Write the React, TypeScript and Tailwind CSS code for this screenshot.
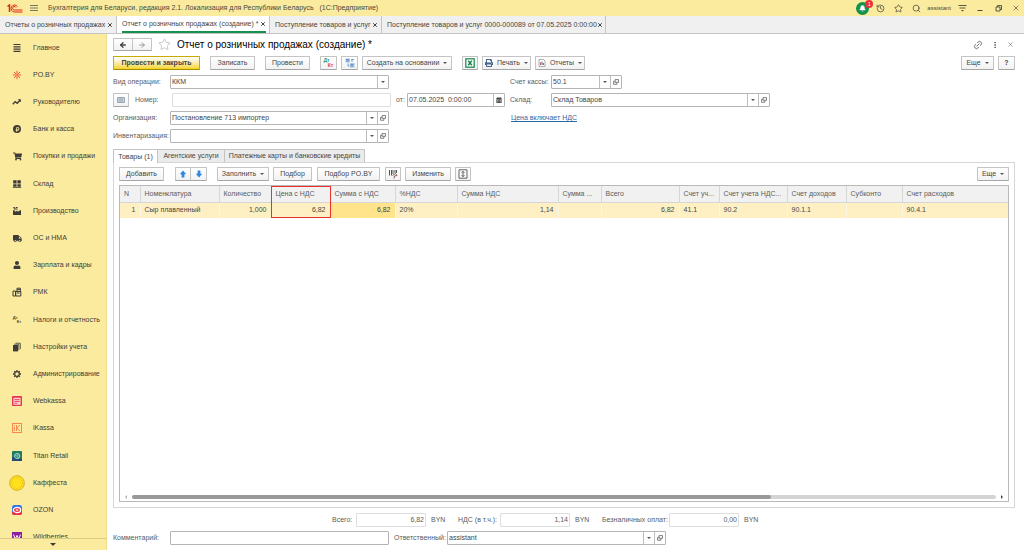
import { useState } from "react";
import type { ReactNode } from "react";
import clsx from "clsx";
import {
  ArrowLeft,
  ArrowRight,
  Bell,
  History,
  Link2,
  MoreVertical,
  Search,
  Star,
  X,
} from "lucide-react";
import {
  FaCalendarAlt,
  FaPrint,
  FaRubleSign,
  FaShoppingCart,
  FaTruck,
  FaUser,
} from "react-icons/fa";

type Section = { label: string; icon: ReactNode };

const sections: Section[] = [
  {
    label: "Главное",
    icon: (
      <svg viewBox="0 0 10 10" className="size-2.5" stroke="#3f3c38" strokeWidth="1.2">
        <path d="M1.5 1.5h7M1.5 3.8h7M1.5 6.1h7M1.5 8.4h7" />
      </svg>
    ),
  },
  {
    label: "PO.BY",
    icon: (
      <svg viewBox="0 0 10 10" className="size-2.5" stroke="#ee5a36" strokeWidth="1">
        <path d="M5 .8v3.6M5 5.6v3.6M.8 5h3.2M6 5h3.2M2 2l2.2 2.2M5.8 5.8L8 8M8 2L5.8 4.200M4.2 5.8L2 8M4 5h2" />
      </svg>
    ),
  },
  {
    label: "Руководителю",
    icon: (
      <svg viewBox="0 0 10 10" className="size-2.5" fill="none" stroke="#3f3c38" strokeWidth="1.4">
        <path d="M.8 7.2l2.4-2.6 2 1.6 3-3.2" />
        <path d="M5.8 2.2h3v3z" fill="#3f3c38" stroke="none" />
      </svg>
    ),
  },
  {
    label: "Банк и касса",
    icon: (
      <span className="flex size-2 items-center justify-center rounded-full bg-[#3f3c38] text-[#fbeb9e]">
        <FaRubleSign size={5} />
      </span>
    ),
  },
  { label: "Покупки и продажи", icon: <FaShoppingCart size={9} /> },
  {
    label: "Склад",
    icon: (
      <svg viewBox="0 0 10 10" className="size-2.5" fill="#3f3c38">
        <path d="M1.2 1.2h3.4v3.4H1.2zM5.4 1.2h3.4v3.4H5.4zM1.2 5.2h3.4v2.6H1.2zM5.4 5.2h3.4v2.6H5.4zM.8 8.2h8.4V9H.8z" />
      </svg>
    ),
  },
  {
    label: "Производство",
    icon: (
      <svg viewBox="0 0 10 10" className="size-2.5" fill="#3f3c38">
        <path d="M1 9V4.2h1.8v1.6L5.400 4.500v1.300L9 4v5z" />
        <path d="M1 1.200h2.400v1H1zM2 2.500h3.600v1H2zM4 1h1.600v1H4z" />
      </svg>
    ),
  },
  { label: "ОС и НМА", icon: <FaTruck size={9} /> },
  { label: "Зарплата и кадры", icon: <FaUser size={8} /> },
  {
    label: "РМК",
    icon: (
      <svg viewBox="0 0 10 10" className="size-2.5" fill="none" stroke="#3f3c38" strokeWidth="1">
        <path d="M1 4h2.5v5H1zM3.8 4.5h5V9h-5zM5 4.5V1.2h3.4v3.3" />
        <path d="M5 6h2.6M5 2.6h3.4" />
      </svg>
    ),
  },
  {
    label: "Налоги и отчетность",
    icon: (
      <span className="flex flex-col text-[4px] leading-[4px] font-bold">
        <span>Дт</span>
        <span className="pl-1">Кт</span>
      </span>
    ),
  },
  {
    label: "Настройки учета",
    icon: (
      <svg viewBox="0 0 10 10" className="size-2.5" fill="#3f3c38">
        <path d="M1 3h5v6.4H1z" />
        <path d="M2.2 2.2h4.6v6M3.6 1.2H8.3v6" fill="none" stroke="#3f3c38" strokeWidth=".8" />
      </svg>
    ),
  },
  {
    label: "Администрирование",
    icon: (
      <svg viewBox="0 0 10 10" className="size-2.5" fill="none" stroke="#3f3c38">
        <circle cx="5" cy="5" r="2.3" strokeWidth="1.200" />
        <path d="M5 1v1.400M5 7.600V9M1 5h1.400M7.600 5H9M2.200 2.200l1 1M6.800 6.800l1 1M7.800 2.200l-1 1M3.200 6.800l-1 1" strokeWidth="1.300" />
      </svg>
    ),
  },
  {
    label: "Webkassa",
    icon: (
      <svg viewBox="0 0 10 10" className="size-2.5">
        <rect width="10" height="10" rx="1" fill="#ea3652" />
        <rect x="1.4" y="1.8" width="7.2" height="7" fill="#fbd4d4" />
        <path d="M2.4 3.6h5.2M2.4 5.4h5.2M2.4 7.2h3" stroke="#ea3652" strokeWidth=".9" />
      </svg>
    ),
  },
  {
    label: "iKassa",
    icon: (
      <svg viewBox="0 0 10 10" className="size-2.5" fill="none" stroke="#f58a4b">
        <rect x=".5" y=".5" width="9" height="9" />
        <path d="M2.4 4v4M2.4 2v1M4.5 2v6M7.8 2L4.8 5l3 3" />
      </svg>
    ),
  },
  {
    label: "Titan Retail",
    icon: (
      <svg viewBox="0 0 10 10" className="size-2.5">
        <rect width="10" height="10" rx="1" fill="#1f7a63" />
        <path d="M0 6l10 2v2H0z" fill="#264b73" />
        <circle cx="5.2" cy="5" r="2.6" fill="none" stroke="#a9dcd0" />
        <path d="M3.6 4l3 3M5 3.4l1.6 1.4" stroke="#e0f2ee" strokeWidth=".8" />
      </svg>
    ),
  },
  {
    label: "Каффеста",
    icon: (
      <svg viewBox="0 0 16 16" className="size-4">
        <circle cx="8" cy="8" r="7.4" fill="#ffe11c" stroke="#c79d20" strokeWidth=".7" />
        <circle cx="8" cy="8" r="5.4" fill="none" stroke="#e2a91c" strokeWidth=".8" strokeDasharray="1 1" />
      </svg>
    ),
  },
  {
    label: "OZON",
    icon: (
      <svg viewBox="0 0 10 10" className="size-2.5">
        <rect width="10" height="10" rx="2.4" fill="#2f74ea" />
        <path d="M0 7l10-1v2a2 2 0 01-2 2H2a2 2 0 01-2-2z" fill="#ee2f45" />
        <ellipse cx="5" cy="5" rx="3.6" ry="2.6" fill="#ee2f45" stroke="#fff" strokeWidth="1.3" />
        <ellipse cx="5" cy="5" rx="1.5" ry=".8" fill="#fff" />
      </svg>
    ),
  },
  {
    label: "Wildberries",
    icon: (
      <svg viewBox="0 0 10 10" className="size-2.5">
        <rect width="10" height="10" fill="#8a1fa0" />
        <path d="M1.6 2.6l1.6 4.6L5 3.4l1.8 3.8 1.6-4.6" fill="none" stroke="#fff" />
      </svg>
    ),
  },
];

const windowTabs = [
  { label: "Отчеты о розничных продажах", width: "w-[117px]" },
  { label: "Отчет о розничных продажах (создание) *", width: "w-[153px]" },
  { label: "Поступление товаров и услуг", width: "w-[112px]" },
  { label: "Поступление товаров и услуг 0000-000089 от 07.05.2025 0:00:00", width: "w-[224px]" },
];

const pageTabs = [
  { label: "Товары (1)", width: "w-[45px]" },
  { label: "Агентские услуги", width: "w-[67px]" },
  { label: "Платежные карты и банковские кредиты", width: "w-[140px]" },
];

type Column = { title: string; value: string; width: string; right?: boolean };

const columns: Column[] = [
  { title: "N", value: "1", width: "w-5", right: true },
  { title: "Номенклатура", value: "Сыр плавленный", width: "w-[79px]" },
  { title: "Количество", value: "1,000", width: "w-[52px]", right: true },
  { title: "Цена с НДС", value: "6,82", width: "w-[59px]", right: true },
  { title: "Сумма с НДС", value: "6,82", width: "w-[65px]", right: true },
  { title: "%НДС", value: "20%", width: "w-[62px]" },
  { title: "Сумма НДС", value: "1,14", width: "w-[101px]", right: true },
  { title: "Сумма ...", value: "", width: "w-[43px]" },
  { title: "Всего", value: "6,82", width: "w-[78px]", right: true },
  { title: "Счет уч...", value: "41.1", width: "w-10" },
  { title: "Счет учета НДС...", value: "90.2", width: "w-[68px]" },
  { title: "Счет доходов", value: "90.1.1", width: "w-[59px]" },
  { title: "Субконто", value: "", width: "w-[56px]" },
  { title: "Счет расходов", value: "90.4.1", width: "" },
];

function Caret() {
  return <span className="border-x-2 border-t-2 border-x-transparent border-t-[#555]" />;
}

function OpenIcon() {
  return (
    <svg viewBox="0 0 8 8" className="size-1.5" fill="none" stroke="#555">
      <path d="M2.8.8h4.6v3.6H2.8zM2.6 3H.8v4h4.4V4.8" />
    </svg>
  );
}

type ButtonProps = { children: ReactNode; className?: string; label?: string };

function Button({ children, className, label }: ButtonProps) {
  return (
    <button
      type="button"
      aria-label={label}
      className={clsx(
        "flex h-3.5 shrink-0 items-center justify-center gap-1 rounded-[1px] border border-[#c4c4c4] border-b-[#a6a6a6] bg-linear-to-b from-white to-[#f2f2f2] whitespace-nowrap",
        className,
      )}
    >
      {children}
    </button>
  );
}

type FieldProps = {
  id: string;
  label: string;
  value?: string;
  labelWidth?: string;
  width?: string;
  muted?: boolean;
  right?: boolean;
  select?: boolean;
  open?: boolean;
  calendar?: boolean;
};

const fieldButton = "flex w-[11px] items-center justify-center border-l border-[#bdbdbd]";

function Field({ id, label, value, labelWidth, width, muted, right, select, open, calendar }: FieldProps) {
  return (
    <div className="flex items-center">
      <label htmlFor={id} className={clsx("shrink-0 whitespace-nowrap text-[#5c5c5c]", labelWidth)}>
        {label}
      </label>
      <div
        className={clsx(
          "flex h-3.5 rounded-[1px] border bg-white",
          muted ? "border-[#dedede]" : "border-[#b4b4b4]",
          width,
        )}
      >
        <input
          id={id}
          defaultValue={value}
          className={clsx("w-full min-w-0 flex-1 bg-transparent px-px outline-none", right && "text-right")}
        />
        {select && (
          <button type="button" aria-label="Выбрать" className={fieldButton}>
            <Caret />
          </button>
        )}
        {open && (
          <button type="button" aria-label="Открыть" className={fieldButton}>
            <OpenIcon />
          </button>
        )}
        {calendar && (
          <button type="button" aria-label="Календарь" className={fieldButton}>
            <FaCalendarAlt size={6} />
          </button>
        )}
      </div>
    </div>
  );
}

function TitleBar() {
  return (
    <header className="flex h-4 shrink-0 items-center bg-[#fbeb9e] pr-1 pl-[7px] text-[#4a473c]">
      <svg viewBox="0 0 32 18" className="h-[9px] w-4" fill="none" stroke="#e0241b" strokeWidth="2">
        <path d="M1 5l4-3v14" strokeWidth="3" />
        <path d="M21 5a7 7 0 10-6 11H31" />
        <path d="M18 7a3.500 3.500 0 10-3 5H31" />
      </svg>
      <button type="button" aria-label="Меню" className="ml-[7px]">
        <svg viewBox="0 0 8 8" className="size-2" stroke="#5d594a" strokeWidth=".8">
          <path d="M0 1.5h8M0 4h8M0 6.5h8" />
        </svg>
      </button>
      <h1 className="ml-2.5 whitespace-pre">
        Бухгалтерия для Беларуси, редакция 2.1. Локализация для Республики Беларусь   (1С:Предприятие)
      </h1>
      <div className="ml-auto flex items-center">
        <button type="button" aria-label="Уведомления" className="relative flex size-[13px] items-center justify-center rounded-full bg-[#13924d]">
          <Bell size={7} fill="#fff" color="#fff" />
          <span className="absolute -top-0.5 -right-1 flex size-2 items-center justify-center rounded-full bg-[#ee3036] text-[5px] text-white">
            1
          </span>
        </button>
        <button type="button" aria-label="История" className="ml-[7px]">
          <History size={9} strokeWidth={2} />
        </button>
        <button type="button" aria-label="Избранное" className="ml-[9px]">
          <Star size={9} strokeWidth={2} />
        </button>
        <button type="button" aria-label="Поиск" className="ml-[9px]">
          <Search size={9} strokeWidth={2} />
        </button>
        <span className="ml-1.5 text-[6px]">assistant</span>
        <button type="button" aria-label="Настройки" className="ml-[7px]">
          <svg viewBox="0 0 9 8" className="h-2 w-[9px]" stroke="#4a473c" strokeWidth=".9">
            <path d="M.5 1.5h8M1.5 4h6" />
            <path d="M3 6h3L4.5 7.5z" fill="#4a473c" stroke="none" />
          </svg>
        </button>
        <button type="button" aria-label="Свернуть" className="ml-2.5">
          <svg viewBox="0 0 6 8" className="h-2 w-1.5" stroke="#4a473c">
            <path d="M.5 6.5h5" />
          </svg>
        </button>
        <button type="button" aria-label="Развернуть" className="ml-3">
          <svg viewBox="0 0 7 8" className="h-2 w-[7px]" fill="none" stroke="#4a473c" strokeWidth=".9">
            <path d="M1 3h4v4H1zM2.5 3V1.5h4v4H5" />
          </svg>
        </button>
        <button type="button" aria-label="Закрыть" className="ml-2.5">
          <X size={8} strokeWidth={2} />
        </button>
      </div>
    </header>
  );
}

function Sidebar() {
  return (
    <nav className="relative flex w-[107px] shrink-0 flex-col overflow-hidden border-r border-[#ecdc8c] bg-[#fbeb9e] text-[#3f3c38]">
      <div className="-mb-px flex min-h-0 flex-1 flex-col">
        {sections.map((s) => (
          <a key={s.label} href="#" className="flex min-h-0 flex-1 items-center pl-[9px]">
            <span className="flex w-4 justify-center">{s.icon}</span>
            <span className="ml-2 whitespace-nowrap">{s.label}</span>
          </a>
        ))}
      </div>
      <button
        type="button"
        aria-label="Прокрутить вниз"
        className="absolute inset-x-0 bottom-0 flex h-3 items-center justify-center border-t border-[#d9cb85] bg-[#fbeb9e]"
      >
        <span className="border-x-[3px] border-t-[3px] border-x-transparent border-t-[#3f3c38]" />
      </button>
    </nav>
  );
}

function Toolbar() {
  return (
    <div className="mt-[5px] flex">
      <Button className="w-[87px] border-[#c9aa00] border-b-[#a68c00] from-[#ffe51a] to-[#f7d400] font-bold">
        Провести и закрыть
      </Button>
      <Button className="ml-2.5 w-[45px]">Записать</Button>
      <Button className="ml-2.5 w-[45px]">Провести</Button>
      <Button className="ml-2.5 w-[17px]" label="Проводки">
        <span className="flex flex-col text-[5px] leading-[5px] font-bold">
          <span className="pr-1 text-[#2a9a6c]">Дт</span>
          <span className="pl-1 text-[#e0453c]">Кт</span>
        </span>
      </Button>
      <Button className="ml-1 w-[17px]" label="Структура">
        <svg viewBox="0 0 10 10" className="size-2.5">
          <path d="M.5.5h4.500v4H.5zM5 5h4.500v4.500H5z" fill="#a9c8e6" />
          <path d="M1 1.500h3M1 3h3M5.500 6.500h3M5.500 8h3M6 1.500h3M6 3h2M3 5.500v2.500h1.500" fill="none" stroke="#4f86bf" strokeWidth=".8" />
        </svg>
      </Button>
      <Button className="ml-1 w-[90px]">
        Создать на основании <Caret />
      </Button>
      <Button className="ml-2.5 w-4" label="Excel">
        <svg viewBox="0 0 10 10" className="size-2.5" fill="none" stroke="#16864a">
          <rect x=".8" y=".8" width="8.4" height="8.4" strokeWidth="1.2" />
          <path d="M3.2 2.8l3.6 4.4M6.8 2.8L3.2 7.2" strokeWidth="1.4" />
        </svg>
      </Button>
      <Button className="ml-1 w-[49px]">
        <FaPrint size={8} color="#45678f" />
        Печать <Caret />
      </Button>
      <Button className="ml-1 w-[50px]">
        <svg viewBox="0 0 8 8" className="size-2">
          <path d="M1 .5h4.5L7 2v5.500H1z" fill="#fff" stroke="#999" strokeWidth=".8" />
          <path d="M2.600 6V3.500M5.400 6V4" stroke="#d8392f" />
          <path d="M4 6V2.500" stroke="#3774b8" />
        </svg>
        Отчеты <Caret />
      </Button>
      <Button className="ml-auto w-[33px]">
        Еще <Caret />
      </Button>
      <Button className="ml-1 w-[17px] font-bold">?</Button>
    </div>
  );
}

function HeaderFields() {
  return (
    <div className="mt-[5px] grid grid-cols-[278px_119px_1fr] gap-y-1">
      <Field id="operation" label="Вид операции:" value="ККМ" labelWidth="w-[57px]" width="w-[219px]" select />
      <span />
      <Field id="cash" label="Счет кассы:" value="50.1" labelWidth="w-[41px]" width="w-[71px]" select open />

      <div className="flex items-center">
        <Button className="mr-1.5 w-4" label="Состояние">
          <svg viewBox="0 0 8 6" className="h-1.5 w-2" fill="#c9d3dd" stroke="#8a98a8" strokeWidth=".8">
            <path d="M.5.5h7v5h-7zM2 2h4M2 4h4" />
          </svg>
        </Button>
        <Field id="number" label="Номер:" labelWidth="w-[37px]" width="w-[219px]" muted />
      </div>
      <div className="pl-[5px]">
        <Field id="date" label="от:" value="07.05.2025  0:00:00" labelWidth="w-[11px]" width="w-[98px]" calendar />
      </div>
      <Field id="store" label="Склад:" value="Склад Товаров" labelWidth="w-[41px]" width="w-[219px]" select open />

      <Field id="company" label="Организация:" value="Постановление 713 импортер" labelWidth="w-[57px]" width="w-[219px]" select open />
      <span />
      <a href="#" className="self-center justify-self-start pl-px text-[#2c6aa6] underline">
        Цена включает НДС
      </a>

      <Field id="inventory" label="Инвентаризация:" labelWidth="w-[57px]" width="w-[219px]" select open />
    </div>
  );
}

function GoodsToolbar() {
  return (
    <div className="flex">
      <Button className="w-[45px]">Добавить</Button>
      <Button className="ml-[11px] w-4" label="Вверх">
        <svg viewBox="0 0 8 8" className="size-2" fill="#2f86e0">
          <path d="M4 .6l3.2 3.6H5.4v3.2H2.6V4.2H.8z" />
        </svg>
      </Button>
      <Button className="-ml-px w-[17px]" label="Вниз">
        <svg viewBox="0 0 8 8" className="size-2" fill="#2f86e0">
          <path d="M4 7.4L.8 3.8h1.8V.6h2.8v3.2h1.8z" />
        </svg>
      </Button>
      <Button className="ml-2.5 w-[52px]">
        Заполнить <Caret />
      </Button>
      <Button className="ml-1 w-[39px]">Подбор</Button>
      <Button className="ml-[5px] w-[63px]">Подбор PO.BY</Button>
      <Button className="ml-[5px] w-4" label="Сканер">
        <svg viewBox="0 0 10 10" className="size-2.5" stroke="#555">
          <path d="M1.5 1v5.500M3.500 1v5.500M5 1v4M7 1v3M8.500 1v3" />
          <path d="M4.500 6.500l3-2 1.500 2-2.500.5-.5 2.500" fill="none" stroke="#8a5a55" />
        </svg>
      </Button>
      <Button className="ml-1 w-[46px]">Изменить</Button>
      <Button className="ml-1 w-4" label="Высота строк">
        <svg viewBox="0 0 10 10" className="size-2.5" fill="none" stroke="#555" strokeWidth=".9">
          <path d="M1 .8h8v8.400H1zM5 2.500v5M3.600 3.800L5 2.300l1.400 1.500M3.600 6.200L5 7.700l1.400-1.500" />
        </svg>
      </Button>
      <Button className="ml-auto w-8">
        Еще <Caret />
      </Button>
    </div>
  );
}

function GoodsTable() {
  return (
    <div className="mt-1 flex min-h-0 flex-1 flex-col border border-[#b9b9b9]">
      <table className="w-full table-fixed border-collapse">
        <thead>
          <tr className="h-4 bg-[#f1f1f1] text-[#5c5c5c]">
            {columns.map((c) => (
              <th
                key={c.title}
                className={clsx(
                  "truncate border-r border-b border-[#d6d6d6] px-1 text-left font-normal last:border-r-0",
                  c.width,
                )}
              >
                {c.title}
              </th>
            ))}
          </tr>
        </thead>
        <tbody>
          <tr className="h-4 bg-[#fff0c4]">
            {columns.map((c) => (
              <td
                key={c.title}
                className={clsx(
                  "relative border-r border-[#fbf6e4] px-1 whitespace-nowrap last:border-r-0",
                  c.right && "text-right",
                  c.title === "Сумма с НДС" && "bg-[#ffe48c]",
                )}
              >
                {c.value}
                {c.title === "Цена с НДС" && (
                  <span className="absolute -inset-x-px -top-[17px] bottom-0 border border-[#ea2f2f]" />
                )}
              </td>
            ))}
          </tr>
        </tbody>
      </table>
      <div className="mt-auto flex h-2 items-center px-[5px]">
        <span className="border-y-2 border-r-2 border-y-transparent border-r-[#b0b0b0]" />
        <div className="mx-[5px] h-1 flex-1 rounded-full bg-[#d4d4d4]">
          <div className="h-full w-[74%] rounded-full bg-[#999]" />
        </div>
        <span className="border-y-2 border-l-2 border-y-transparent border-l-[#444]" />
      </div>
    </div>
  );
}

function Totals() {
  return (
    <div className="mt-[5px] flex items-center pl-[219px] text-[#5c5c5c]">
      <Field id="total" label="Всего:" value="6,82" labelWidth="w-6" width="w-[70px]" muted right />
      <span className="ml-[5px] w-[27px]">BYN</span>
      <Field id="vat" label="НДС (в т.ч.):" value="1,14" labelWidth="w-[42px]" width="w-[70px]" muted right />
      <span className="ml-[5px] w-[27px]">BYN</span>
      <Field id="cashless" label="Безналичных оплат:" value="0,00" labelWidth="w-[67px]" width="w-[70px]" muted right />
      <span className="ml-[5px]">BYN</span>
    </div>
  );
}

export default function App() {
  const [activePage, setActivePage] = useState(0);

  return (
    <div className="flex h-screen flex-col overflow-hidden bg-white font-['Liberation_Sans',Arial,sans-serif] text-[7px] leading-[10px] text-[#454545]">
      <TitleBar />
      <div className="flex h-[18px] shrink-0 border-b border-[#c4c4c4] bg-[#f0f0f0]">
        {windowTabs.map((tab, i) => (
          <div
            key={tab.label}
            className={clsx("flex shrink-0 items-center border-r border-[#c4c4c4] pr-[3px] pl-[5px]", tab.width, i === 1 && "bg-white")}
          >
            <button
              type="button"
              className={clsx("h-full flex-1 text-left whitespace-nowrap", i === 1 && "border-b-2 border-[#159050]")}
            >
              {tab.label}
            </button>
            <button
              type="button"
              aria-label="Закрыть вкладку"
              className={clsx("flex h-full items-center", i === 1 && "border-b-2 border-[#159050]")}
            >
              <X size={6} strokeWidth={4} />
            </button>
          </div>
        ))}
      </div>
      <div className="flex min-h-0 flex-1">
        <Sidebar />
        <main className="flex min-w-0 flex-1 flex-col pt-1 pr-[9px] pb-[5px] pl-1.5">
          <div className="flex h-[13px] items-center">
            <Button className="h-[13px] w-5" label="Назад">
              <ArrowLeft size={8} strokeWidth={4} />
            </Button>
            <Button className="-ml-px h-[13px] w-5 text-[#999]" label="Вперед">
              <ArrowRight size={8} strokeWidth={3} />
            </Button>
            <button type="button" aria-label="В избранное" className="ml-1.5">
              <Star size={13} strokeWidth={1} color="#999" />
            </button>
            <h2 className="ml-1.5 text-[10px] text-black">Отчет о розничных продажах (создание) *</h2>
            <div className="ml-auto flex items-center gap-2 pr-px text-[#666]">
              <button type="button" aria-label="Ссылка">
                <Link2 size={10} className="-rotate-45" />
              </button>
              <button type="button" aria-label="Меню формы">
                <MoreVertical size={8} strokeWidth={3} />
              </button>
              <button type="button" aria-label="Закрыть форму">
                <X size={7} />
              </button>
            </div>
          </div>
          <Toolbar />
          <HeaderFields />
          <div className="mt-1.5 flex h-[13px]">
            {pageTabs.map((tab, i) => (
              <button
                key={tab.label}
                type="button"
                onClick={() => setActivePage(i)}
                className={clsx(
                  "border border-b-0 border-[#c4c4c4] whitespace-nowrap not-first:border-l-0",
                  tab.width,
                  i === activePage ? "relative -mb-px bg-white" : "bg-[#ebebeb]",
                )}
              >
                {tab.label}
              </button>
            ))}
          </div>
          <section className="flex min-h-0 flex-1 flex-col border border-[#d6d6d6] px-[5px] pt-1 pb-[5px]">
            <GoodsToolbar />
            <GoodsTable />
          </section>
          <Totals />
          <div className="mt-1 flex items-center gap-[5px]">
            <Field id="comment" label="Комментарий:" labelWidth="w-[57px]" width="w-[219px]" />
            <Field id="responsible" label="Ответственный:" value="assistant" labelWidth="w-[53px]" width="w-[219px]" select open />
          </div>
        </main>
      </div>
    </div>
  );
}
